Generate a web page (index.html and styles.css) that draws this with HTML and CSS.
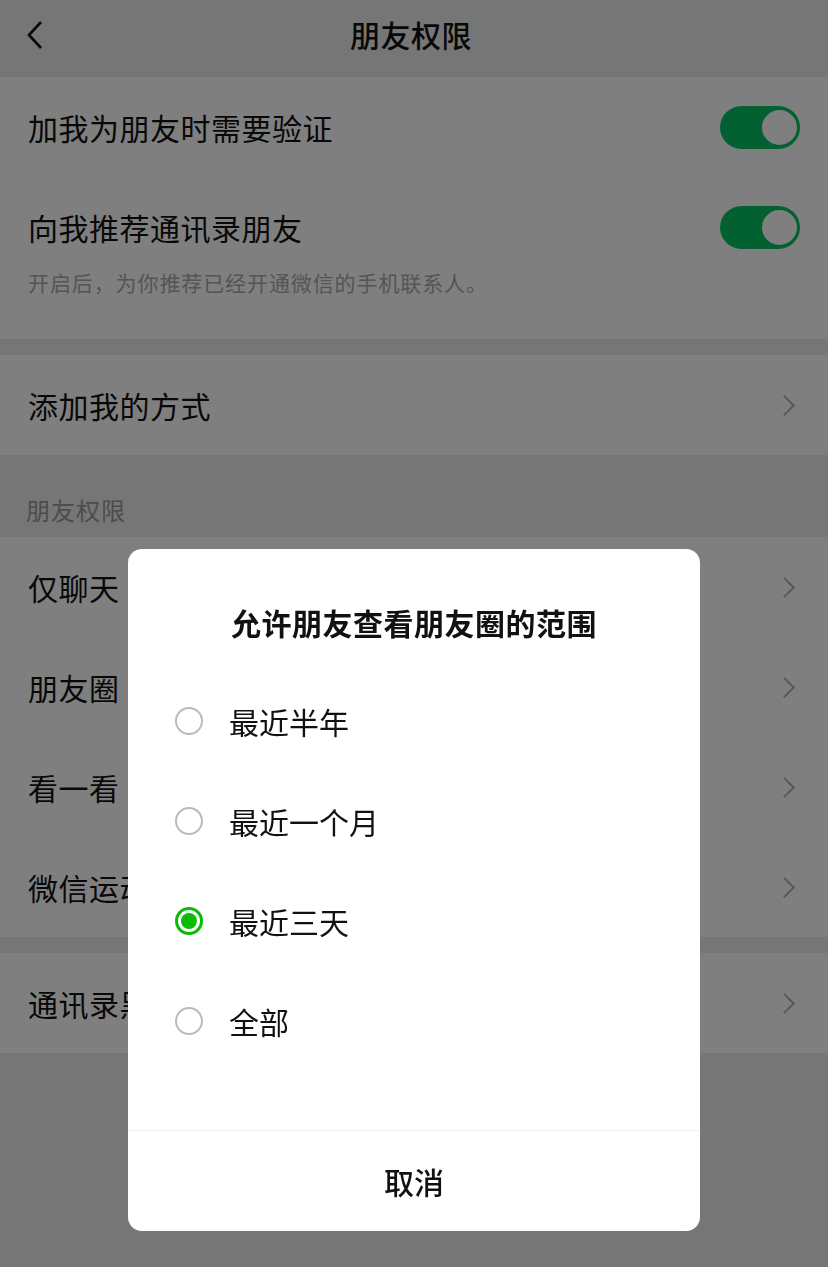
FILE: index.html
```html
<html>
<head>
    <meta charset="utf-8">
    <title>朋友权限</title>
    <link rel="stylesheet" href="styles.css">
</head>
<body>
    <div class="page">
        <header class="nav">
            <svg class="nav-back" width="20" height="30" viewBox="0 0 20 30">
                <polyline points="16,2 4,15 16,28" fill="none" stroke="#111" stroke-width="2.6" stroke-linejoin="miter"/>
            </svg>
            <div class="nav-title">朋友权限</div>
        </header>

        <div class="group">
            <div class="cell">
                <span class="cell-label">加我为朋友时需要验证</span>
                <span class="switch on"><span class="knob"></span></span>
            </div>
            <div class="cell cell-desc">
                <div class="cell-row">
                    <span class="cell-label">向我推荐通讯录朋友</span>
                    <span class="switch on"><span class="knob"></span></span>
                </div>
                <p class="desc">开启后，为你推荐已经开通微信的手机联系人。</p>
            </div>
        </div>

        <div class="group">
            <div class="cell">
                <span class="cell-label">添加我的方式</span>
                <span class="arrow"></span>
            </div>
        </div>

        <div class="section-title">朋友权限</div>

        <div class="group">
            <div class="cell"><span class="cell-label">仅聊天</span><span class="arrow"></span></div>
            <div class="cell"><span class="cell-label">朋友圈</span><span class="arrow"></span></div>
            <div class="cell"><span class="cell-label">看一看</span><span class="arrow"></span></div>
            <div class="cell"><span class="cell-label">微信运动</span><span class="arrow"></span></div>
        </div>

        <div class="group">
            <div class="cell"><span class="cell-label">通讯录黑名单</span><span class="arrow"></span></div>
        </div>
    </div>

    <!-- 弹窗 -->
    <div class="mask"></div>
    <div class="dialog">
        <div class="dialog-title">允许朋友查看朋友圈的范围</div>
        <ul class="options">
            <li class="option"><span class="radio"></span>最近半年</li>
            <li class="option"><span class="radio"></span>最近一个月</li>
            <li class="option"><span class="radio checked"></span>最近三天</li>
            <li class="option"><span class="radio"></span>全部</li>
        </ul>
        <div class="dialog-footer">取消</div>
    </div>
</body>
</html>
```

FILE: styles.css
```css
body {
    margin: 0;
    background-color: #ededed;
    font-family: "Noto Sans CJK SC", sans-serif;
    color: #111;
}

.page {
    min-height: 1267px;
}

/* 顶部导航 */
.nav {
    height: 77px;
    display: flex;
    align-items: center;
    justify-content: center;
    position: relative;
    background-color: #ededed;
}

.nav-back {
    position: absolute;
    left: 25px;
    top: 20px;
}

.nav-title {
    font-size: 30px;
    letter-spacing: 0.5px;
    font-weight: 500;
    margin-top: -10px;
    margin-right: 6px;
}

/* 列表 */
.group {
    background-color: #fff;
    margin-bottom: 16px;
}

.cell {
    height: 100px;
    padding: 0 28px;
    display: flex;
    align-items: center;
    justify-content: space-between;
    box-sizing: border-box;
}

.cell-label {
    font-size: 30px;
    letter-spacing: 0.5px;
    line-height: 40px;
}

.cell-desc {
    height: 162px;
    display: block;
    padding-top: 28px;
}

.cell-row {
    height: 44px;
    display: flex;
    align-items: center;
    justify-content: space-between;
}

.desc {
    margin: 18px 0 0 0;
    font-size: 21px;
    letter-spacing: 0.9px;
    line-height: 30px;
    color: #aaa;
}

.arrow {
    width: 13px;
    height: 13px;
    border-top: 2px solid #b2b2b2;
    border-right: 2px solid #b2b2b2;
    transform: rotate(45deg);
    margin-right: 8px;
}

.section-title {
    height: 82px;
    margin-top: -16px;
    padding: 33px 26px 0;
    box-sizing: border-box;
    font-size: 24px;
    letter-spacing: 1px;
    line-height: 44px;
    color: #999;
}

/* 开关 */
.switch {
    width: 80px;
    height: 43px;
    border-radius: 22px;
    background-color: #07c160;
    display: flex;
    align-items: center;
    justify-content: flex-end;
    padding: 0 1px;
    box-sizing: border-box;
}

.knob {
    width: 39px;
    height: 39px;
    border-radius: 50%;
    background-color: #fff;
    border: 2px solid #07c160;
    box-sizing: border-box;
}

/* 遮罩和弹窗 */
.mask {
    position: fixed;
    left: 0;
    top: 0;
    right: 0;
    bottom: 0;
    background-color: rgba(0, 0, 0, 0.5);
}

.dialog {
    position: fixed;
    left: 128px;
    top: 549px;
    width: 572px;
    background-color: #fff;
    border-radius: 14px;
    overflow: hidden;
}

.dialog-title {
    padding: 53px 0 29px;
    line-height: 40px;
    text-align: center;
    font-size: 30px;
    letter-spacing: 0.5px;
    font-weight: 700;
    color: #111;
}

.options {
    list-style: none;
    margin: 0 0 59px 0;
    padding: 0;
}

.option {
    height: 100px;
    display: flex;
    align-items: center;
    padding-left: 47px;
    font-size: 30px;
    color: #111;
}

.radio {
    width: 28px;
    height: 28px;
    border-radius: 50%;
    border: 2px solid #bbb;
    box-sizing: border-box;
    margin-right: 26px;
    position: relative;
}

.radio.checked {
    border: 3px solid #09bb07;
}

.radio.checked::after {
    content: "";
    position: absolute;
    left: 3px;
    top: 3px;
    width: 16px;
    height: 16px;
    border-radius: 50%;
    background-color: #09bb07;
}

.dialog-footer {
    height: 100px;
    border-top: 1px solid #f0f0f0;
    display: flex;
    align-items: center;
    justify-content: center;
    font-size: 30px;
    font-weight: 500;
    color: #111;
}
```
